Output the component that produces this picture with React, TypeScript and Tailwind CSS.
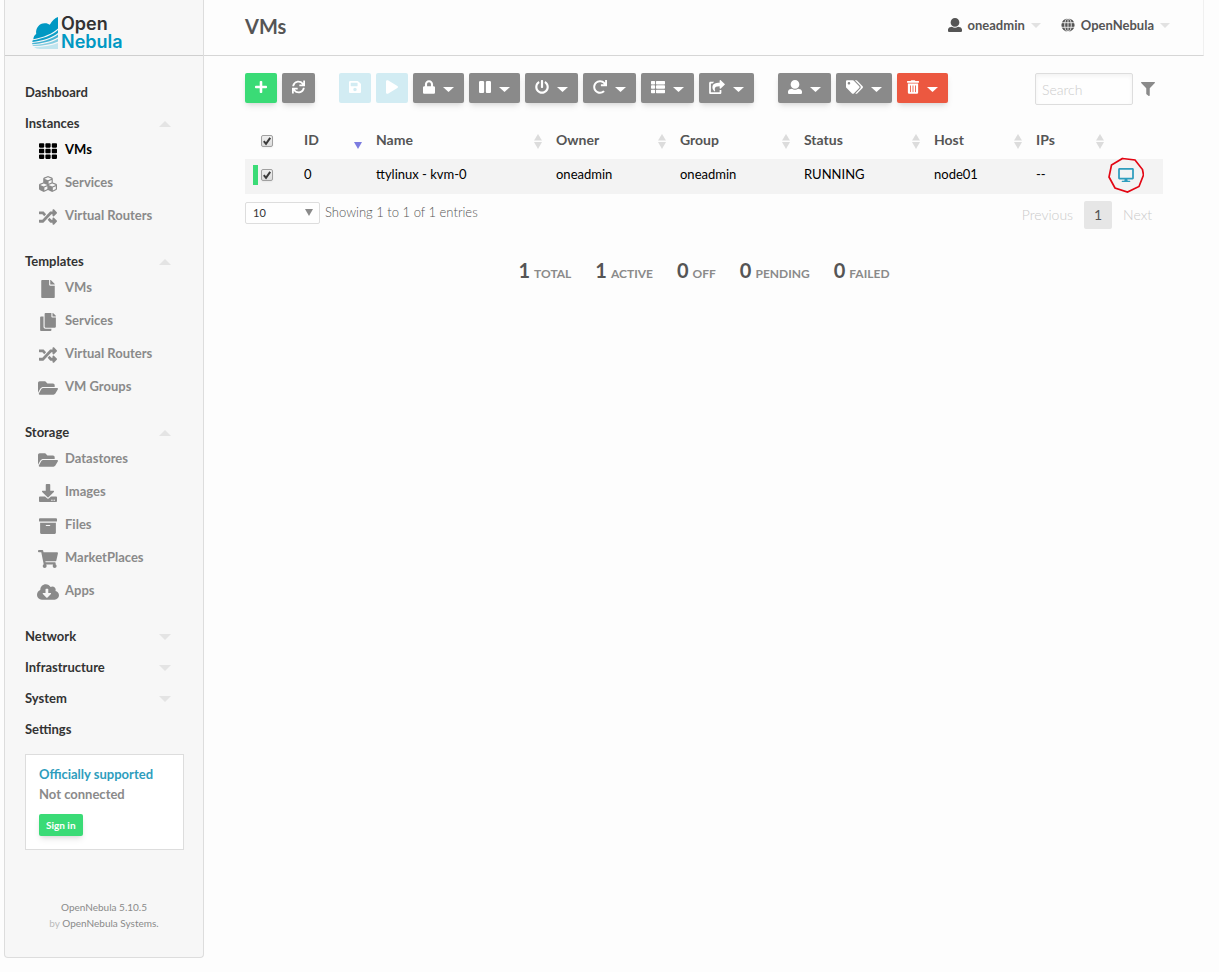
import { useState } from 'react';
import type { ComponentType, ReactNode } from 'react';
import {
  FaArchive,
  FaCloudDownloadAlt,
  FaCopy,
  FaCubes,
  FaDesktop,
  FaDownload,
  FaFile,
  FaFilter,
  FaFolderOpen,
  FaLock,
  FaPause,
  FaPlay,
  FaPlus,
  FaPowerOff,
  FaRandom,
  FaRedo,
  FaSave,
  FaShareSquare,
  FaShoppingCart,
  FaSync,
  FaTags,
  FaTh,
  FaThList,
  FaTrashAlt,
} from 'react-icons/fa';

type Icon = ComponentType<{ className?: string }>;

function UserIcon({ className }: { className?: string }) {
  return (
    <svg viewBox="0 0 512 512" fill="currentColor" className={className} aria-hidden="true">
      <path d="M256 0c88.366 0 160 71.634 160 160s-71.634 160-160 160S96 248.366 96 160 167.634 0 256 0zm183.283 333.821l-71.313-17.828c-74.923 53.89-165.738 41.864-223.94 0l-71.313 17.828C29.981 344.505 0 382.903 0 426.955V464c0 26.51 21.49 48 48 48h416c26.51 0 48-21.49 48-48v-37.045c0-44.052-29.981-82.45-72.717-93.134z" />
    </svg>
  );
}

function GlobeIcon({ className }: { className?: string }) {
  return (
    <svg viewBox="0 0 14 14" fill="none" className={className} aria-hidden="true">
      <circle cx="7" cy="7" r="6.6" fill="currentColor" />
      <path d="M0 4.7h14M0 9.3h14M7 0v14" stroke="#fdfdfd" strokeWidth="0.8" />
      <ellipse cx="7" cy="7" rx="3.3" ry="6.8" stroke="#fdfdfd" strokeWidth="0.8" />
    </svg>
  );
}

function Logo() {
  return (
    <a href="#dashboard" className="flex items-center gap-[3px]" aria-label="OpenNebula">
      <svg viewBox="0 0 26 32" className="h-8 w-[26px]" aria-hidden="true">
        <path d="M26 0v11.500C21 16.500 11 20.500 1.300 22.300 1.500 20 2.300 18.300 4.200 16.900 3.300 11 7.500 6 13 6.200c2 0 3.500.6 4.800 1.500C20 3.800 23 1 26 0Z" fill="#0098c3" />
        <path d="M26 13v3C20 21 10 23.800 0.300 25l.4-1.700C10 21.800 20 18.500 26 13Z" fill="#0f9fc8" />
        <path d="M26 17.500v2.800C19.500 24.600 10 26.600 0.200 27.300v-1.200C10 24.900 19.500 22.500 26 17.500Z" fill="#45b3d3" />
        <path d="M26 21.800v2.700C19.500 27.500 11 28.900 1 29.100l-.6-.9C10 27.500 19 25.900 26 21.800Z" fill="#85cde1" />
        <path d="M26 26v6H8c-2.700 0-4.700-.7-6-2C11 29.900 19.500 28.700 26 26Z" fill="#c0e5ef" />
      </svg>
      <span className="flex flex-col font-['Inter',sans-serif] text-lg leading-[18px] font-semibold">
        <span className="text-[#333333]">Open</span>
        <span className="text-[#0098c3]">Nebula</span>
      </span>
    </a>
  );
}

function Caret({ up = false, className = 'h-1.5 w-3' }: { up?: boolean; className?: string }) {
  return (
    <svg viewBox="0 0 12 6" preserveAspectRatio="none" fill="currentColor" className={`shrink-0 ${className}`} aria-hidden="true">
      <path d={up ? 'M0 6 6 0l6 6Z' : 'M0 0h12L6 6Z'} />
    </svg>
  );
}

type NavItem = { label: string; icon: Icon; size: string; active?: boolean };
type NavGroup = { label: string; items?: NavItem[]; collapsible?: boolean };

const navGroups: NavGroup[] = [
  { label: 'Dashboard' },
  {
    label: 'Instances',
    collapsible: true,
    items: [
      { label: 'VMs', icon: FaTh, size: 'w-[18px]', active: true },
      { label: 'Services', icon: FaCubes, size: 'w-[18px]' },
      { label: 'Virtual Routers', icon: FaRandom, size: 'w-[18px]' },
    ],
  },
  {
    label: 'Templates',
    collapsible: true,
    items: [
      { label: 'VMs', icon: FaFile, size: 'w-[14px]' },
      { label: 'Services', icon: FaCopy, size: 'w-4' },
      { label: 'Virtual Routers', icon: FaRandom, size: 'w-[18px]' },
      { label: 'VM Groups', icon: FaFolderOpen, size: 'w-5' },
    ],
  },
  {
    label: 'Storage',
    collapsible: true,
    items: [
      { label: 'Datastores', icon: FaFolderOpen, size: 'w-5' },
      { label: 'Images', icon: FaDownload, size: 'w-[18px]' },
      { label: 'Files', icon: FaArchive, size: 'w-[18px]' },
      { label: 'MarketPlaces', icon: FaShoppingCart, size: 'w-5' },
      { label: 'Apps', icon: FaCloudDownloadAlt, size: 'w-[22px]' },
    ],
  },
  { label: 'Network', collapsible: true },
  { label: 'Infrastructure', collapsible: true },
  { label: 'System', collapsible: true },
  { label: 'Settings' },
];

function Sidebar() {
  return (
    <aside className="w-[200px] shrink-0 rounded-b border-x border-b border-[#dddddd] bg-[#f7f7f7] pb-[26px]">
      <div className="flex h-14 items-start border-b border-[#cfcfcf] pt-[15px] pl-[27px]">
        <Logo />
      </div>

      <nav className="mt-[22px] px-5 text-[13px] font-bold">
        {navGroups.map((group) => (
          <div key={group.label} className={group.items ? 'mb-[13px]' : 'mb-[5px]'}>
            <a href="#" className="flex h-[26px] items-center justify-between pt-1 pr-3 text-[#333333]">
              {group.label}
              {group.collapsible && <Caret up={!!group.items} className="h-1.5 w-3 text-[#e4e4e4]" />}
            </a>
            {group.items && (
              <ul>
                {group.items.map((item) => (
                  <li key={item.label}>
                    <a
                      href="#"
                      className={`flex h-[33px] items-center gap-1.5 pb-[3px] pl-3 ${item.active ? 'text-black' : 'text-[#8a8a8a]'}`}
                    >
                      <span className="flex w-[22px] justify-center pt-0.5">
                        <item.icon className={`h-[18px] ${item.size}`} />
                      </span>
                      {item.label}
                    </a>
                  </li>
                ))}
              </ul>
            )}
          </div>
        ))}
      </nav>

      {/* Support box */}
      <div className="mt-[13px] mr-[19px] ml-5 border border-[#dddddd] bg-white px-[13px] pt-[9px] pb-[13px] text-[13px] leading-5 font-bold">
        <a href="#" className="block text-[#2e9dbd]">
          Officially supported
        </a>
        <p className="text-[#8a8a8a]">Not connected</p>
        <button className="mt-[10px] block h-[22px] rounded-xs bg-[#3adb76] px-[7px] text-[10px] leading-[22px] text-white shadow-md">
          Sign in
        </button>
      </div>

      <footer className="mt-[49px] text-center text-[10px] leading-4 text-[#8a8a8a]">
        <p>OpenNebula 5.10.5</p>
        <p>
          <span className="text-[#bbbbbb]">by</span> <a href="#">OpenNebula Systems.</a>
        </p>
      </footer>
    </aside>
  );
}

function Header() {
  return (
    <header className="flex h-14 items-start justify-between border-r border-b border-r-[#f0f0f0] border-b-[#d6d6d6] pr-[33px] pl-[41px] text-[#555555]">
      <h1 className="pt-3 text-xl leading-7 font-bold">VMs</h1>
      <div className="flex gap-5 pt-[15px] text-[13px] leading-5 font-bold">
        <button className="flex items-center gap-1.5">
          <UserIcon className="size-[14px]" />
          oneadmin
          <Caret className="h-[5px] w-[10px] text-[#e2e2e2]" />
        </button>
        <button className="flex items-center gap-1.5">
          <GlobeIcon className="size-[14px]" />
          OpenNebula
          <Caret className="h-[5px] w-[10px] text-[#e2e2e2]" />
        </button>
      </div>
    </header>
  );
}

type Tool = { label: string; icon: Icon; size: string; tone?: 'success' | 'disabled' | 'danger'; menu?: boolean };

const toolGroups: Tool[][] = [
  [
    { label: 'Create', icon: FaPlus, size: 'w-3', tone: 'success' },
    { label: 'Refresh', icon: FaSync, size: 'w-[13px]' },
  ],
  [
    { label: 'Save', icon: FaSave, size: 'w-3', tone: 'disabled' },
    { label: 'Play', icon: FaPlay, size: 'w-3', tone: 'disabled' },
    { label: 'Lock', icon: FaLock, size: 'w-3', menu: true },
    { label: 'Pause', icon: FaPause, size: 'w-3', menu: true },
    { label: 'Power off', icon: FaPowerOff, size: 'w-[14px]', menu: true },
    { label: 'Reboot', icon: FaRedo, size: 'w-[14px]', menu: true },
    { label: 'Deploy', icon: FaThList, size: 'w-[14px]', menu: true },
    { label: 'Share', icon: FaShareSquare, size: 'w-4', menu: true },
  ],
  [
    { label: 'Ownership', icon: UserIcon, size: 'w-[14px]', menu: true },
    { label: 'Labels', icon: FaTags, size: 'w-[17px]', menu: true },
    { label: 'Delete', icon: FaTrashAlt, size: 'w-3', tone: 'danger', menu: true },
  ],
];

const toneClasses = {
  success: 'bg-[#3adb76] shadow-md',
  disabled: 'bg-[#d2ecf3]',
  danger: 'bg-[#ec5840] shadow-md',
};

function ToolButton({ tool }: { tool: Tool }) {
  return (
    <button
      aria-label={tool.label}
      disabled={tool.tone === 'disabled'}
      className={`flex h-[30px] items-center gap-2 rounded-xs px-[10px] text-white ${tool.tone ? toneClasses[tool.tone] : 'bg-[#8a8a8a] shadow-md'}`}
    >
      <span className="pb-0.5">
        <tool.icon className={`h-[14px] ${tool.size}`} />
      </span>
      {tool.menu && <Caret className="mt-0.5 h-[5px] w-[11px]" />}
    </button>
  );
}

function Toolbar() {
  return (
    <div className="flex items-start justify-between">
      <div className="flex gap-6">
        {toolGroups.map((group, i) => (
          <div key={i} className="flex gap-[5px]">
            {group.map((tool) => (
              <ToolButton key={tool.label} tool={tool} />
            ))}
          </div>
        ))}
      </div>
      <div className="flex items-center gap-2 pr-2">
        <input
          type="search"
          aria-label="Search"
          placeholder="Search"
          className="h-8 w-[98px] rounded-xs border border-[#dddddd] bg-[#fefefe] px-1.5 text-sm font-light shadow-inner placeholder:text-[#cccccc]"
        />
        <button aria-label="Filter" className="text-[#8a8a8a]">
          <FaFilter className="size-[14px]" />
        </button>
      </div>
    </div>
  );
}

function Checkbox({ label, checked, onChange }: { label: string; checked: boolean; onChange: () => void }) {
  return (
    <label className="relative block size-3">
      <input
        type="checkbox"
        aria-label={label}
        checked={checked}
        onChange={onChange}
        className="peer block size-3 appearance-none rounded-xs border border-[#a0a0a0] bg-linear-to-b from-[#eeeeee] to-[#dcdcdc] shadow-xs"
      />
      <svg viewBox="0 0 12 12" className="pointer-events-none absolute inset-0 hidden size-3 peer-checked:block" aria-hidden="true">
        <path d="m2.8 6.200 2.200 2.600 4.200-5.900" fill="none" stroke="#3a3a3a" strokeWidth="2" />
      </svg>
    </label>
  );
}

function SortIcon({ sorted = false }: { sorted?: boolean }) {
  return (
    <svg viewBox="0 0 8 15" className="mt-[3px] h-[15px] w-2" aria-hidden="true">
      {!sorted && <path d="M0 6.500 4 0l4 6.500Z" fill="#dcdcdc" />}
      <path d="M0 8h8l-4 7Z" fill={sorted ? '#7c7ce0' : '#dcdcdc'} />
    </svg>
  );
}

const columns = [
  { label: 'ID', width: 'w-[72px]' },
  { label: 'Name', width: '' },
  { label: 'Owner', width: 'w-[124px]' },
  { label: 'Group', width: 'w-[124px]' },
  { label: 'Status', width: 'w-[130px]' },
  { label: 'Host', width: 'w-[102px]' },
  { label: 'IPs', width: 'w-[82px]' },
];

const vm = ['0', 'ttylinux - kvm-0', 'oneadmin', 'oneadmin', 'RUNNING', 'node01', '--'];

function VmTable() {
  const [checked, setChecked] = useState(true);
  const toggle = () => setChecked(!checked);

  return (
    <table className="mt-[18px] w-full table-fixed text-left text-[13px]">
      <thead>
        <tr className="h-9 text-sm text-[#555555]">
          <th className="w-[49px] pl-4">
            <Checkbox label="Select all" checked={checked} onChange={toggle} />
          </th>
          {columns.map((col) => (
            <th key={col.label} className={`pr-1 pb-0.5 pl-[10px] font-bold ${col.width}`}>
              <div className="flex items-center justify-between">
                {col.label}
                <SortIcon sorted={col.label === 'ID'} />
              </div>
            </th>
          ))}
          <th className="w-[55px]" />
        </tr>
      </thead>
      <tbody>
        <tr className="h-[35px] bg-[#f3f3f3] text-black">
          <td className="pb-1 pl-2">
            <div className="flex items-center gap-[3px]">
              <span className="h-5 w-[5px] bg-[#3adb76]" />
              <Checkbox label="Select VM 0" checked={checked} onChange={toggle} />
            </div>
          </td>
          {vm.map((value, i) => (
            <td key={i} className="pb-1 pl-[10px] whitespace-nowrap">
              {value}
            </td>
          ))}
          <td className="pb-1 pl-[10px]">
            <button aria-label="Open VNC console" className="relative block text-[#2e9dbd]">
              <FaDesktop className="h-[14px] w-4" />
              {/* Hand drawn ring around the console button */}
              <svg viewBox="0 0 36 36" className="absolute -top-[11px] -left-[10px] size-9 max-w-none" aria-hidden="true">
                <path
                  d="M14.500 1.500 27 3l7.500 9.500 1 5.500L31 29.500 19.500 35 7 31 1 20l2.500-12Z"
                  fill="none"
                  stroke="#e30613"
                  strokeWidth="1.7"
                />
              </svg>
            </button>
          </td>
        </tr>
      </tbody>
    </table>
  );
}

function Pagination() {
  return (
    <div className="mt-[7px] flex items-start justify-between font-light text-[#555555]">
      <div className="flex items-center gap-[5px] pt-px text-[13px]">
        <div className="relative">
          <select
            aria-label="Entries per page"
            className="block h-[22px] w-[75px] appearance-none rounded-xs border border-[#dddddd] bg-[#fefefe] px-[7px] text-[11px] font-normal text-[#333333]"
          >
            <option>10</option>
            <option>25</option>
            <option>50</option>
          </select>
          <Caret className="pointer-events-none absolute top-[7px] right-[7px] h-[7px] w-2 text-[#8a8a8a]" />
        </div>
        <p>Showing 1 to 1 of 1 entries</p>
      </div>
      <div className="flex items-center pr-[11px] text-sm">
        <button disabled className="text-[#cacaca]">
          Previous
        </button>
        <button className="mx-[11px] h-7 w-7 rounded-xs bg-[#e6e6e6] font-normal">1</button>
        <button disabled className="text-[#cacaca]">
          Next
        </button>
      </div>
    </div>
  );
}

const stats = [
  { value: 1, label: 'TOTAL' },
  { value: 1, label: 'ACTIVE' },
  { value: 0, label: 'OFF' },
  { value: 0, label: 'PENDING' },
  { value: 0, label: 'FAILED' },
];

function Stat({ value, children }: { value: number; children: ReactNode }) {
  return (
    <p className="flex items-baseline gap-1 text-xs font-bold text-[#8a8a8a]">
      <span className="text-xl leading-7 text-[#555555]">{value}</span>
      {children}
    </p>
  );
}

export default function App() {
  return (
    <div className="flex min-h-screen items-start bg-[#fdfdfd] pr-[15px] pb-[14px] pl-1 font-['Lato',sans-serif]">
      <Sidebar />
      <div className="min-w-0 flex-1">
        <Header />
        <main className="px-[41px] pt-[17px]">
          <Toolbar />
          <VmTable />
          <Pagination />
          <div className="mt-[27px] flex justify-center gap-6">
            {stats.map((s) => (
              <Stat key={s.label} value={s.value}>
                {s.label}
              </Stat>
            ))}
          </div>
        </main>
      </div>
    </div>
  );
}
